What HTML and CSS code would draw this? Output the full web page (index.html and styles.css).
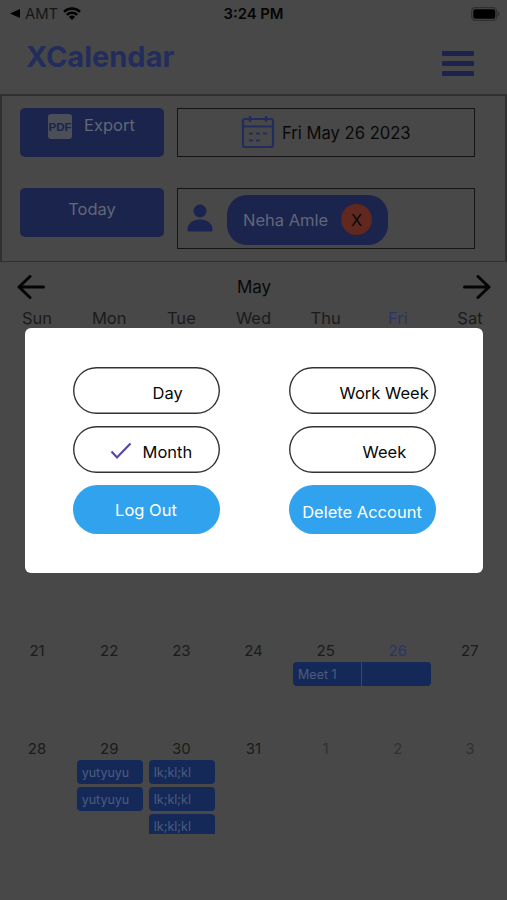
FILE: index.html
```html
<!DOCTYPE html>
<html lang="en">
<head>
<meta charset="utf-8">
<title>XCalendar</title>
<link rel="stylesheet" href="styles.css">
</head>
<body>
<div class="screen">
  <div class="status">
    <div class="status-left">
      <svg width="10" height="9" viewBox="0 0 10 9"><path d="M0 4.5 10 0v9z"/></svg>
      <span class="carrier">AMT</span>
      <svg class="wifi" width="18" height="13" viewBox="0 0 18 13"><path d="M1 4.8a11.6 11.6 0 0 1 16 0M3.9 7.9a7.4 7.4 0 0 1 10.2 0" fill="none" stroke="#000" stroke-width="2.5"/><path d="M9 13 6 10a4.3 4.3 0 0 1 6 0z"/></svg>
    </div>
    <div class="clock">3:24 PM</div>
    <div class="status-right">
      <svg width="29" height="14" viewBox="0 0 29 14"><rect x=".7" y=".7" width="25" height="12.6" rx="3.5" fill="none" stroke="#303030" stroke-width="1.3"/><rect x="2.3" y="2.3" width="22" height="9.4" rx="2"/><path d="M27 4.5c2 .5 2 4.500 0 5z" fill="#303030"/></svg>
    </div>
  </div>
  <header class="header">
    <h1 class="brand">XCalendar</h1>
    <div class="menu"><i></i><i></i><i></i></div>
  </header>
  <section class="panel">
    <div class="btn export">
      <span class="pdf">PDF</span>
      <span class="t-export">Export</span>
    </div>
    <div class="box date">
      <svg width="34" height="34" viewBox="0 0 34 34" fill="none" stroke="#222d5e" stroke-width="2.200"><rect x="2" y="4" width="30" height="28" rx="2"/><path d="M2 11.500H32M9 1V7M25 1V7"/><path d="M8 18.500h4M15 18.500h4M22 18.500h4M8 25.500h4M15 25.500h4"/></svg>
      <span class="t-date">Fri May 26 2023</span>
    </div>
    <div class="btn today"><span class="t-today">Today</span></div>
    <div class="box people">
      <svg width="26" height="28" viewBox="0 0 26 28" fill="#1b2450"><circle cx="13" cy="7" r="6.500"/><path d="M.5 27.500V25C.5 20.500 5.500 15.500 13 15.500S25.500 20.500 25.500 25V27.500z"/></svg>
      <div class="chip"><span class="t-name">Neha Amle</span><span class="remove">X</span></div>
    </div>
  </section>
  <nav class="month">
    <svg width="28" height="24" viewBox="0 0 28 24"><path d="M26.500 12H2M13 1.500 2 12l11 10.500"/></svg>
    <span class="t-month">May</span>
    <svg width="28" height="24" viewBox="0 0 28 24"><path d="M1.500 12H26M15 1.500 26 12 15 22.500"/></svg>
  </nav>
  <div class="days">
    <span>Sun</span><span>Mon</span><span>Tue</span><span>Wed</span><span>Thu</span><span class="now">Fri</span><span>Sat</span>
  </div>
  <div class="weeks">
    <div class="week"></div>
    <div class="week"></div>
    <div class="week"></div>
    <div class="week">
      <div class="cell"><b>21</b></div>
      <div class="cell"><b>22</b></div>
      <div class="cell"><b>23</b></div>
      <div class="cell"><b>24</b></div>
      <div class="cell"><b>25</b><div class="event starts">Meet 1</div></div>
      <div class="cell"><b class="now">26</b><div class="event ends"></div></div>
      <div class="cell"><b>27</b></div>
    </div>
    <div class="week">
      <div class="cell"><b>28</b></div>
      <div class="cell"><b>29</b><div class="event">yutyuyu</div><div class="event">yutyuyu</div></div>
      <div class="cell"><b>30</b><div class="event">lk;kl;kl</div><div class="event">lk;kl;kl</div><div class="event">lk;kl;kl</div></div>
      <div class="cell"><b>31</b></div>
      <div class="cell"><b class="next">1</b></div>
      <div class="cell"><b class="next">2</b></div>
      <div class="cell"><b class="next">3</b></div>
    </div>
  </div>
</div>
<div class="modal">
  <div class="option day"><span>Day</span></div>
  <div class="option workweek"><span>Work Week</span></div>
  <div class="option chosen"><svg width="22" height="18" viewBox="0 0 22 18"><path d="M1.500 9.500 7 15.500 20.500 1.500"/></svg><span>Month</span></div>
  <div class="option week-opt"><span>Week</span></div>
  <div class="action logout"><span>Log Out</span></div>
  <div class="action delete"><span>Delete Account</span></div>
</div>
</body>
</html>
```
FILE: styles.css
```css
* { box-sizing: border-box; }
body { margin: 0; width: 507px; height: 900px; overflow: hidden; background: #484848; font-family: Inter, "Liberation Sans", sans-serif; color: #080808; position: relative; }
svg { display: block; flex: none; }
span { white-space: nowrap; }
.screen { height: 900px; display: flex; flex-direction: column; }
.status { height: 28px; display: grid; grid-template-columns: 1fr auto 1fr; align-items: center; padding: 0 7px 1px 10px; font-size: 14.800px; }
.status-left { display: flex; align-items: center; gap: 5px; }
.carrier { color: #161616; }
.clock { font-weight: 600; color: #050505; margin-left: -3px; }
.status-right { display: flex; justify-content: flex-end; }
.header { height: 66px; display: flex; justify-content: space-between; padding: 0 33px 0 26px; }
.brand { margin: 11px 0 0; font-size: 29px; line-height: 35px; font-weight: 700; color: #222d5e; }
.menu { display: flex; flex-direction: column; gap: 5px; padding-top: 23px; width: 32px; }
.menu i { height: 5px; background: #1b2450; border-radius: 1px; }
.panel { height: 168px; border: 2px solid #303030; border-bottom-width: 1px; padding: 12px 0 0 18px; display: grid; grid-template-columns: 144px 298px; grid-template-rows: 49px 61px; gap: 31px 13px; align-items: start; }
.btn { height: 49px; border-radius: 5px; background: #1b244c; color: #626778; display: flex; font-size: 16.500px; line-height: 20px; }
.export { padding: 6px 0 0 28px; gap: 12px; }
.pdf { width: 24px; height: 25px; border-radius: 3px; background: #4c4f57; color: #1b2450; font-family: "Liberation Sans", sans-serif; font-size: 11.500px; line-height: 26px; font-weight: 700; text-align: center; }
.t-export { margin-top: 1px; }
.today { justify-content: center; padding-top: 11px; }
.box { border: 1.500px solid #141414; height: 49px; display: flex; align-items: center; }
.date { padding-left: 63px; gap: 7px; font-size: 16.600px; }
.date svg { margin-top: -2px; }
.people { height: 61px; padding-left: 9px; }
.people svg { margin-top: -2px; }
.chip { width: 161px; height: 50px; margin-left: 14px; margin-top: 2px; border-radius: 20px; background: #1b244c; color: #626778; display: flex; align-items: center; padding-left: 16px; gap: 13px; font-size: 16.500px; }
.remove { width: 31px; height: 31px; border-radius: 50%; background: #60281f; color: #080808; display: flex; align-items: center; justify-content: center; }
.month { height: 47px; display: flex; justify-content: space-between; align-items: center; padding: 3px 16px 0 17px; font-size: 17px; }
.month path { fill: none; stroke: #050505; stroke-width: 3; stroke-linecap: round; stroke-linejoin: round; }
.days { height: 37px; display: grid; grid-template-columns: repeat(7, 1fr); padding: 0 1px; text-align: center; font-size: 16.500px; line-height: 19px; color: #1b1b1b; }
.now, .cell .now { color: #2a3566; }
.weeks { height: 488px; display: grid; grid-template-rows: 97px 98px 98px 98px 97px; padding: 0 1px; }
.week { display: grid; grid-template-columns: repeat(7, 1fr); overflow: hidden; min-height: 0; }
.cell { min-width: 0; }
.cell b { display: block; height: 23px; line-height: 23px; font-size: 15px; font-weight: 400; text-align: center; color: #1b1b1b; }
.cell .next { color: #313131; }
.cell .now { color: #2a3566; }
.event { height: 24px; margin: 0 2.500px 3px 3.500px; border-radius: 4px; background: #152958; color: #4b5c7c; font-size: 12.500px; line-height: 25px; padding-left: 5px; }
.event.starts { margin-right: 0; border-radius: 4px 0 0 4px; border-right: 1.500px solid #48484f; }
.event.ends { margin-left: 0; border-radius: 0 4px 4px 0; }
.modal { position: absolute; left: 25px; top: 328px; width: 458px; height: 245px; border-radius: 6px; background: #fff; padding: 39px 0 0 47.500px; display: grid; grid-template-columns: 147px 147px; grid-template-rows: 47px 47px 49px; gap: 12px 69px; align-content: start; font-size: 16.500px; }
.option { box-shadow: inset 0 0 0 1.400px #333; border-radius: 24px; display: flex; align-items: center; padding-top: 5px; color: #080808; }
.option svg { margin-top: -3px; fill: none; stroke: #5a45a8; stroke-width: 2.200; }
.option.day { padding-left: 80px; }
.option.workweek { padding-left: 51px; }
.option.chosen { padding-left: 37px; gap: 11px; }
.option.week-opt { padding-left: 74px; }
.action { border-radius: 25px; background: #31a2ed; color: #fff; display: flex; justify-content: center; align-items: center; }
.delete { padding-top: 4px; }
```
